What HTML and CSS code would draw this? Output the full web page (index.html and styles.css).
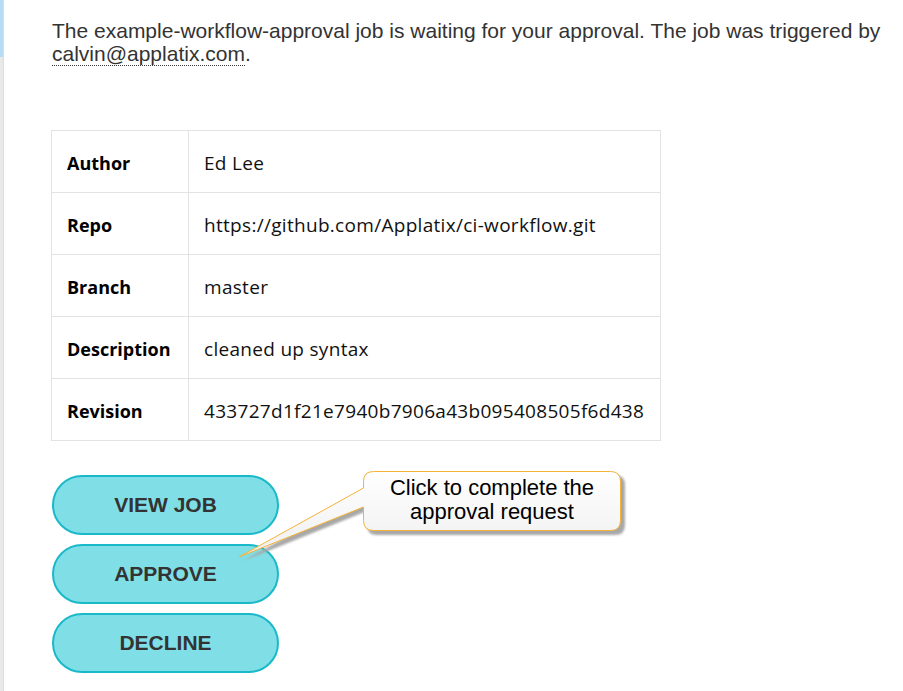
FILE: index.html
```html
<!DOCTYPE html>
<html>
<head>
<meta charset="utf-8">
<link rel="stylesheet" href="styles.css">
</head>
<body>
<div class="page">
  <div class="rail"><div class="rail-top"></div></div>
  <main class="main">
    <p class="intro">The example-workflow-approval job is waiting for your approval. The job was triggered by <span class="email">calvin@applatix.com</span>.</p>
    <table class="details">
      <tr><th>Author</th><td>Ed Lee</td></tr>
      <tr><th>Repo</th><td>https://github.com/Applatix/ci-workflow.git</td></tr>
      <tr><th>Branch</th><td>master</td></tr>
      <tr><th>Description</th><td>cleaned up syntax</td></tr>
      <tr><th>Revision</th><td>433727d1f21e7940b7906a43b095408505f6d438</td></tr>
    </table>
    <div class="actions">
      <button class="pill">VIEW JOB</button>
      <button class="pill">APPROVE</button>
      <button class="pill">DECLINE</button>
      <svg class="callout-shape" width="410" height="110" viewBox="0 0 410 110">
        <defs>
          <linearGradient id="cg" x1="0" y1="0" x2="0" y2="1">
            <stop offset="0" stop-color="#ffffff"/>
            <stop offset="1" stop-color="#efefef"/>
          </linearGradient>
          <filter id="blur" x="-10%" y="-10%" width="120%" height="130%">
            <feGaussianBlur stdDeviation="1.2"/>
          </filter>
        </defs>
        <path transform="translate(4,4)" filter="url(#blur)" fill="#a8a8a8" d="M144 11 H382 Q392 11 392 21 V61 Q392 71 382 71 H144 Q134 71 134 61 V47 L10 97 L134 28 V21 Q134 11 144 11 Z"/>
        <path fill="url(#cg)" stroke="#f5b238" stroke-width="1" d="M144.5 11.5 H381.5 Q391.5 11.5 391.5 21.5 V60.5 Q391.5 70.5 381.5 70.5 H144.5 Q134.5 70.5 134.5 60.5 V47 L10 97 L134.5 28 V21.5 Q134.5 11.5 144.5 11.5 Z"/>
      </svg>
      <div class="callout-text">Click to complete the approval request</div>
    </div>
  </main>
</div>
</body>
</html>
```
FILE: styles.css
```css
html, body {
  margin: 0;
  padding: 0;
  background: #ffffff;
}
.page {
  display: flex;
  min-height: 691px;
}
.rail {
  width: 3px;
  background: #e9e9e9;
  border-right: 1px solid #dcdcdc;
  flex: none;
}
.rail-top {
  height: 57px;
  background: #b9dcf5;
}
.main {
  padding-left: 47px;
  padding-top: 19px;
  flex: 1;
}
.intro {
  margin: 0;
  font-family: "Liberation Sans", Arial, sans-serif;
  font-size: 21px;
  line-height: 23px;
  color: #333333;
  padding-left: 1px;
  width: 845px;
}
.email {
  border-bottom: 1px dotted #333;
}
.details {
  margin-top: 65px;
  border-collapse: collapse;
  font-family: "Open Sans", sans-serif;
  font-size: 18px;
  color: #111;
  width: 610px;
}
.details th, .details td {
  border: 1px solid #e3e3e3;
  height: 59px;
  padding: 2px 15px 0;
  text-align: left;
}
.details th {
  width: 106px;
  font-weight: 700;
  color: #000;
}
.details td {
  font-weight: 400;
  font-size: 19px;
  letter-spacing: 0.3px;
}
.actions {
  position: relative;
  margin-top: 34px;
  display: flex;
  flex-direction: column;
  gap: 9px;
  align-items: flex-start;
}
.pill {
  width: 227px;
  height: 60px;
  border: 2px solid #19b9c9;
  border-radius: 30px;
  background: #80dfe6;
  color: #333;
  font-family: "Liberation Sans", Arial, sans-serif;
  font-weight: 700;
  font-size: 21px;
  padding: 0;
  margin-left: 1px;
}
.callout-shape {
  position: absolute;
  left: 178px;
  top: -15px;
}
.callout-text {
  position: absolute;
  left: 312px;
  top: -4px;
  width: 258px;
  height: 60px;
  box-sizing: border-box;
  padding: 5px 4px 0;
  text-align: center;
  font-family: "Liberation Sans", Arial, sans-serif;
  font-size: 22px;
  line-height: 24px;
  color: #000;
}
```
